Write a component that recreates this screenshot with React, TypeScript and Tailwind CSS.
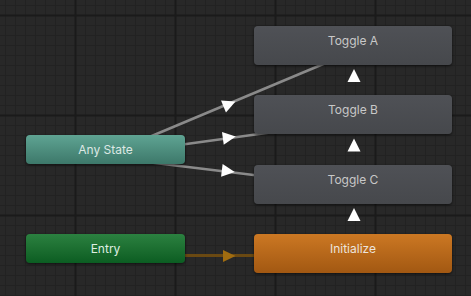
import React from "react";

type Pt = [number, number];

function arrowPoints(c: Pt, d: Pt, len = 6.5, half = 6.5): string {
  const n = Math.hypot(d[0], d[1]);
  const ux = d[0] / n;
  const uy = d[1] / n;
  const px = -uy;
  const py = ux;
  const tip: Pt = [c[0] + ux * len, c[1] + uy * len];
  const b: Pt = [c[0] - ux * len, c[1] - uy * len];
  const p1: Pt = [b[0] + px * half, b[1] + py * half];
  const p2: Pt = [b[0] - px * half, b[1] - py * half];
  return [tip, p1, p2].map((p) => `${p[0].toFixed(2)},${p[1].toFixed(2)}`).join(" ");
}

function Node({
  label,
  className,
  textClass,
  tall,
}: {
  label: string;
  className: string;
  textClass: string;
  tall?: boolean;
}) {
  return (
    <div
      className={`absolute rounded-[4px] shadow-[0_1px_3px_rgba(0,0,0,0.6)] flex justify-center ${
        tall ? "items-start pt-[7px]" : "items-center"
      } ${className}`}
    >
      <span className={`font-['Inter','Noto_Sans',sans-serif] text-[12px] leading-[16px] ${textClass}`}>
        {label}
      </span>
    </div>
  );
}

export default function App() {
  const minorV: number[] = [];
  for (let x = 5; x < 471; x += 10) minorV.push(x);
  const minorH: number[] = [];
  for (let y = 5; y < 296; y += 10) minorH.push(y);
  const majorV = [75, 175, 275, 375];
  const majorH = [15, 115, 215];

  return (
    <div className="relative w-[471px] h-[296px] overflow-hidden bg-[#282828]">
      <svg className="absolute inset-0" width="471" height="296" viewBox="0 0 471 296">
        {minorV.map((x) => (
          <line key={`v${x}`} x1={x + 0.5} y1={0} x2={x + 0.5} y2={296} stroke="#222222" strokeWidth={1} />
        ))}
        {minorH.map((y) => (
          <line key={`h${y}`} x1={0} y1={y + 0.5} x2={471} y2={y + 0.5} stroke="#222222" strokeWidth={1} />
        ))}
        {majorV.map((x) => (
          <line key={`mv${x}`} x1={x + 0.5} y1={0} x2={x + 0.5} y2={296} stroke="#1a1a1a" strokeWidth={2} />
        ))}
        {majorH.map((y) => (
          <line key={`mh${y}`} x1={0} y1={y + 0.5} x2={471} y2={y + 0.5} stroke="#1a1a1a" strokeWidth={2} />
        ))}

        {/* Any State -> Toggle A */}
        <line x1={110} y1={153.5} x2={340} y2={57} stroke="#8a8a8a" strokeWidth={2.6} />
        {/* Any State -> Toggle B */}
        <line x1={110} y1={154.5} x2={270} y2={132.5} stroke="#8a8a8a" strokeWidth={2.6} />
        {/* Any State -> Toggle C */}
        <line x1={110} y1={157.5} x2={270} y2={177} stroke="#8a8a8a" strokeWidth={2.6} />
        {/* Entry -> Initialize */}
        <line x1={180} y1={255.5} x2={260} y2={255.5} stroke="#6a4912" strokeWidth={3} />

        <polygon points={arrowPoints([229.5, 104], [173, -71])} fill="#ffffff" />
        <polygon points={arrowPoints([229.3, 137.5], [78, -10.7])} fill="#ffffff" />
        <polygon points={arrowPoints([228.3, 171.2], [97, 11.7])} fill="#ffffff" />
        <polygon points="235.5,256 223,250 223,262" fill="#a06c10" />

        <polygon points="354,69 360.5,82 347.5,82" fill="#ffffff" />
        <polygon points="354,138.5 360.5,151.5 347.5,151.5" fill="#ffffff" />
        <polygon points="354,208 360.5,221 347.5,221" fill="#ffffff" />
      </svg>

      <Node
        label="Toggle A"
        tall
        className="left-[254px] top-[26px] w-[198px] h-[39px] bg-linear-to-b from-[#4f5156] to-[#46484c]"
        textClass="text-[#c8c8c8]"
      />
      <Node
        label="Toggle B"
        tall
        className="left-[254px] top-[95px] w-[198px] h-[39px] bg-linear-to-b from-[#4f5156] to-[#46484c]"
        textClass="text-[#c8c8c8]"
      />
      <Node
        label="Toggle C"
        tall
        className="left-[254px] top-[165px] w-[198px] h-[39px] bg-linear-to-b from-[#4f5156] to-[#46484c]"
        textClass="text-[#c8c8c8]"
      />
      <Node
        label="Initialize"
        tall
        className="left-[254px] top-[234px] w-[198px] h-[39px] bg-linear-to-b from-[#cc7823] to-[#a25812]"
        textClass="text-[#ece4dc]"
      />
      <Node
        label="Any State"
        className="left-[26px] top-[135px] w-[159px] h-[29px] bg-linear-to-b from-[#5fa493] to-[#3d786a]"
        textClass="text-[#dde8e4]"
      />
      <Node
        label="Entry"
        className="left-[26px] top-[234px] w-[159px] h-[29px] bg-linear-to-b from-[#2b8140] to-[#0b5d22]"
        textClass="text-[#dfeee2]"
      />
    </div>
  );
}
